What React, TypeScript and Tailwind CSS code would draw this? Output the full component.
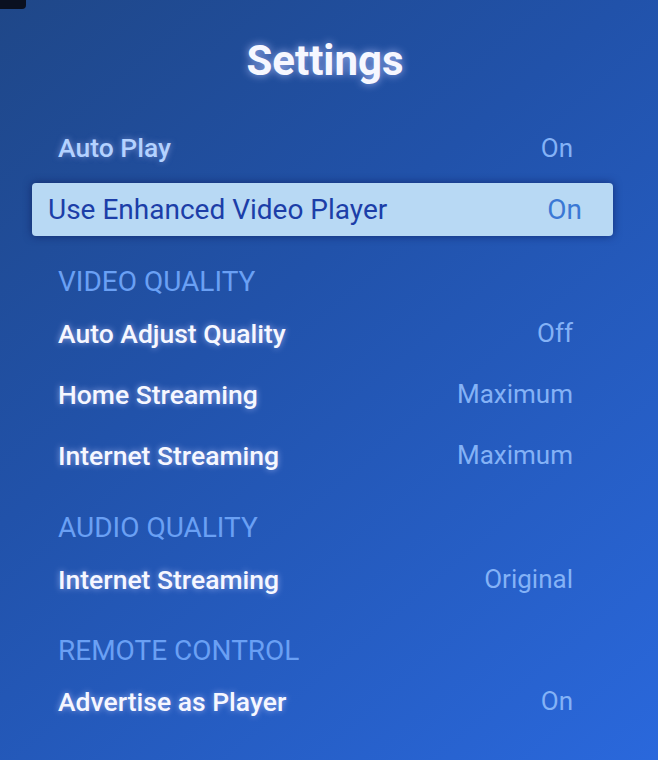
import React from "react";

type Row = { label: string; value: string };

const sections: { title: string; rows: Row[] }[] = [
  {
    title: "VIDEO QUALITY",
    rows: [
      { label: "Auto Adjust Quality", value: "Off" },
      { label: "Home Streaming", value: "Maximum" },
      { label: "Internet Streaming", value: "Maximum" },
    ],
  },
  {
    title: "AUDIO QUALITY",
    rows: [{ label: "Internet Streaming", value: "Original" }],
  },
  {
    title: "REMOTE CONTROL",
    rows: [{ label: "Advertise as Player", value: "On" }],
  },
];

const SettingRow = ({ label, value }: Row) => (
  <div className="flex h-[61px] items-center justify-between">
    <span className="text-[26.5px] font-medium text-[#f6f7ff] [text-shadow:0_0_6px_rgba(190,200,255,0.7)]">
      {label}
    </span>
    <span className="text-[26px] text-[#84b2f6]">{value}</span>
  </div>
);

export default function App() {
  return (
    <div className="relative h-[760px] w-[658px] overflow-hidden bg-[linear-gradient(140deg,#1f4788_0%,#2152aa_40%,#2a68dc_100%)] font-['Roboto',Arial,sans-serif]">
      {/* dark bezel corner from the photo */}
      <div className="absolute left-0 top-0 h-[9px] w-[26px] rounded-br-[4px] bg-[#0a1020]" />

      <div className="flex h-[120px] items-center justify-center">
        <h1 className="pr-[8px] text-[42px] font-bold text-[#f6f7ff] [text-shadow:0_0_8px_rgba(190,200,255,0.8)]">
          Settings
        </h1>
      </div>

      <div className="pl-[58px] pr-[85px]">
        <div className="flex h-[56px] items-center justify-between">
          <span className="text-[26.5px] font-medium text-[#b4d2ff] [text-shadow:0_0_6px_rgba(190,200,255,0.5)]">
            Auto Play
          </span>
          <span className="text-[26px] text-[#84b2f6]">On</span>
        </div>

        <div className="-ml-[26px] -mr-[40px] mt-[7px] flex h-[53px] items-center justify-between rounded-[4px] bg-[#b8d9f4] pl-[16px] pr-[31px] shadow-[0_0_8px_rgba(10,20,80,0.6)]">
          <span className="text-[28px] text-[#1c3ea8]">Use Enhanced Video Player</span>
          <span className="text-[28px] text-[#3b78d4]">On</span>
        </div>

        {sections.map((section, i) => (
          <div key={section.title}>
            <div
              className={`flex items-center ${
                i === 0 ? "mt-[25px] h-[42px]" : i === 1 ? "mt-[20px] h-[43px]" : "mt-[21px] h-[40px]"
              }`}
            >
              <span className="text-[28px] text-[#6aa0f4]">{section.title}</span>
            </div>
            {section.rows.map((row, j) => (
              <SettingRow key={j} {...row} />
            ))}
          </div>
        ))}
      </div>
    </div>
  );
}
